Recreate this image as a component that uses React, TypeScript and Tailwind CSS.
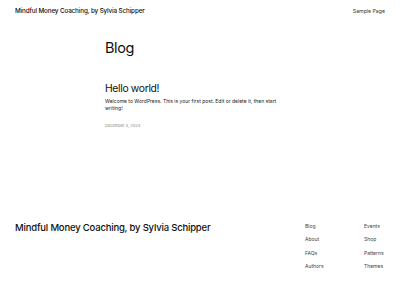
const footerLinks = [
  ["Blog", "About", "FAQs", "Authors"],
  ["Events", "Shop", "Patterns", "Themes"],
] as const;

export default function App() {
  return (
    <div className="flex h-[300px] w-[400px] flex-col bg-white font-['Inter',sans-serif] text-[#111111]">
      <header className="flex h-[22px] items-center justify-between px-[15px] pt-[1px]">
        <span className="text-[6.3px] font-medium tracking-[-0.02em]">Mindful Money Coaching, by Sylvia Schipper</span>
        <span className="text-[5.2px] text-[#333]">Sample Page</span>
      </header>

      <main className="mx-auto w-[190px] pt-[19px]">
        <h1 className="text-[14.5px] leading-none tracking-[-0.03em]">Blog</h1>
        <h2 className="mt-[27.5px] text-[10.3px] leading-none tracking-[-0.03em]">Hello world!</h2>
        <p className="mt-[4.5px] w-[180px] text-[5px] leading-[7.5px] text-[#222]">
          Welcome to WordPress. This is your first post. Edit or delete it, then start writing!
        </p>
        <p className="mt-[10px] text-[4px] leading-[6px] text-[#888]">December 5, 2024</p>
      </main>

      <footer className="mt-auto flex h-[89px] items-start justify-between px-[15px] pt-[10px]">
        <span className="text-[9.5px] font-medium tracking-[-0.02em]">Mindful Money Coaching, by Sylvia Schipper</span>
        <div className="grid grid-cols-[59px_21px] pt-[2px]">
          {footerLinks.map((col, i) => (
            <ul key={i} className="flex flex-col gap-[5.8px] text-[5px] leading-[7.5px] text-[#444]">
              {col.map((label) => (
                <li key={label}>{label}</li>
              ))}
            </ul>
          ))}
        </div>
      </footer>
    </div>
  );
}
